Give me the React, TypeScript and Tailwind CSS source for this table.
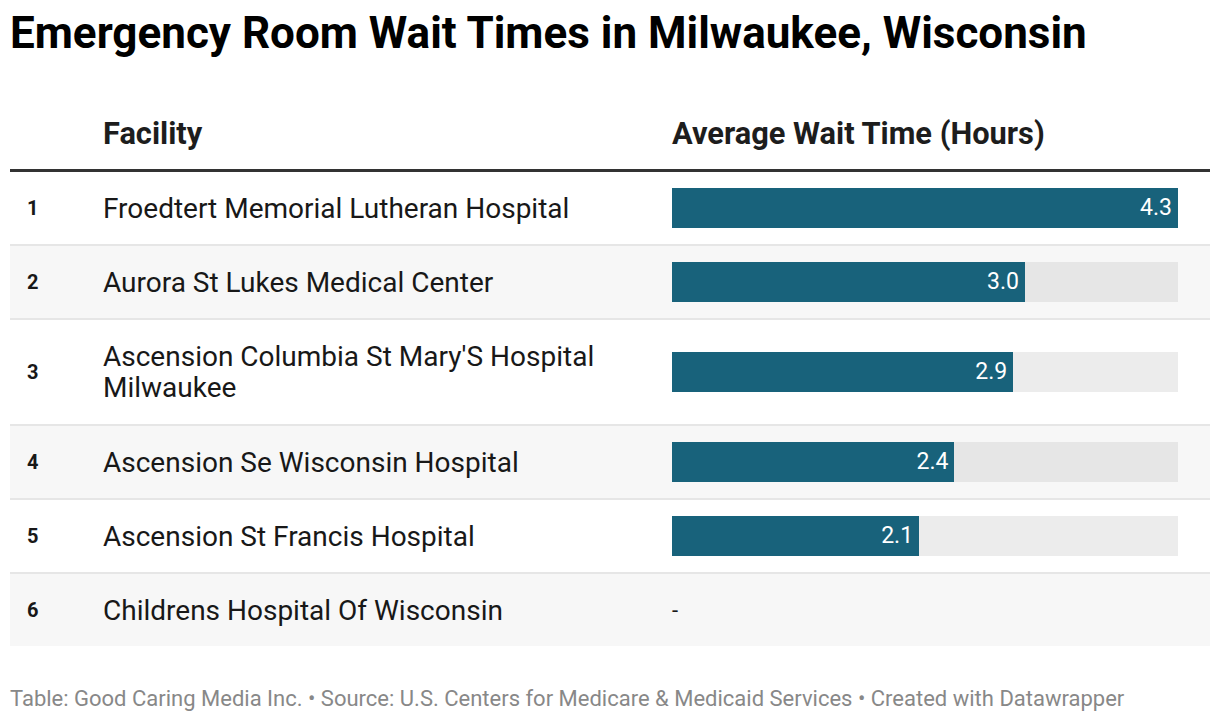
import React from "react";

/* DATA */
const rows = [
  { rank: 1, name: "Froedtert Memorial Lutheran Hospital", value: 4.3 },
  { rank: 2, name: "Aurora St Lukes Medical Center", value: 3.0 },
  { rank: 3, name: "Ascension Columbia St Mary'S Hospital Milwaukee", value: 2.9 },
  { rank: 4, name: "Ascension Se Wisconsin Hospital", value: 2.4 },
  { rank: 5, name: "Ascension St Francis Hospital", value: 2.1 },
  { rank: 6, name: "Childrens Hospital Of Wisconsin", value: null as number | null },
];

const MAX = 4.3;

export default function App() {
  return (
    <main
      className="w-[1220px] h-[722px] bg-white px-[10px] pt-[7px] text-[#181818]"
      style={{ fontFamily: "Roboto, 'Liberation Sans', sans-serif" }}
    >
      {/* TITLE */}
      <h1 className="text-[44px] leading-[52px] font-bold text-black">
        Emergency Room Wait Times in Milwaukee, Wisconsin
      </h1>

      {/* TABLE */}
      <div className="mt-[57px]">
        {/* HEADER */}
        <div className="flex pb-[17px] border-b-[3px] border-[#333333] text-[30.8px] leading-[36px] font-bold text-[#1d1d1d]">
          <div className="w-[93px]" />
          <div className="w-[569px]">Facility</div>
          <div className="w-[506px] whitespace-nowrap">Average Wait Time (Hours)</div>
        </div>

        {/* ROWS */}
        {rows.map((r, i) => {
          const gray = i % 2 === 1;
          const last = i === rows.length - 1;
          return (
            <div
              key={r.rank}
              className={`flex items-center ${
                r.rank === 3 ? "h-[106px]" : last ? "h-[72px]" : "h-[74px]"
              } ${gray ? "bg-[#f7f7f7]" : "bg-white"} ${
                last ? "" : "border-b-2 border-[#e6e6e6]"
              }`}
            >
              <div className="w-[93px] pl-[17px] text-[20px] font-bold">
                {r.rank}
              </div>
              <div className="w-[569px] pr-[60px] text-[28px] leading-[31px]">{r.name}</div>
              <div className="w-[506px]">
                {r.value === null ? (
                  <span className="text-[22px]">-</span>
                ) : (
                  <div
                    className={`h-[40px] flex ${
                      gray ? "bg-[#e6e6e6]" : "bg-[#ececec]"
                    }`}
                  >
                    <div
                      className="h-full bg-[#18627b] flex items-center justify-end pr-[6px] text-white text-[23px]"
                      style={{ width: `${(r.value / MAX) * 100}%` }}
                    >
                      {r.value.toFixed(1)}
                    </div>
                  </div>
                )}
              </div>
            </div>
          );
        })}
      </div>

      {/* FOOTER */}
      <p className="mt-[40px] text-[22px] leading-[26px] text-[#888888] whitespace-nowrap">
        Table: Good Caring Media Inc. • Source: U.S. Centers for Medicare &amp; Medicaid Services • Created with Datawrapper
      </p>
    </main>
  );
}
